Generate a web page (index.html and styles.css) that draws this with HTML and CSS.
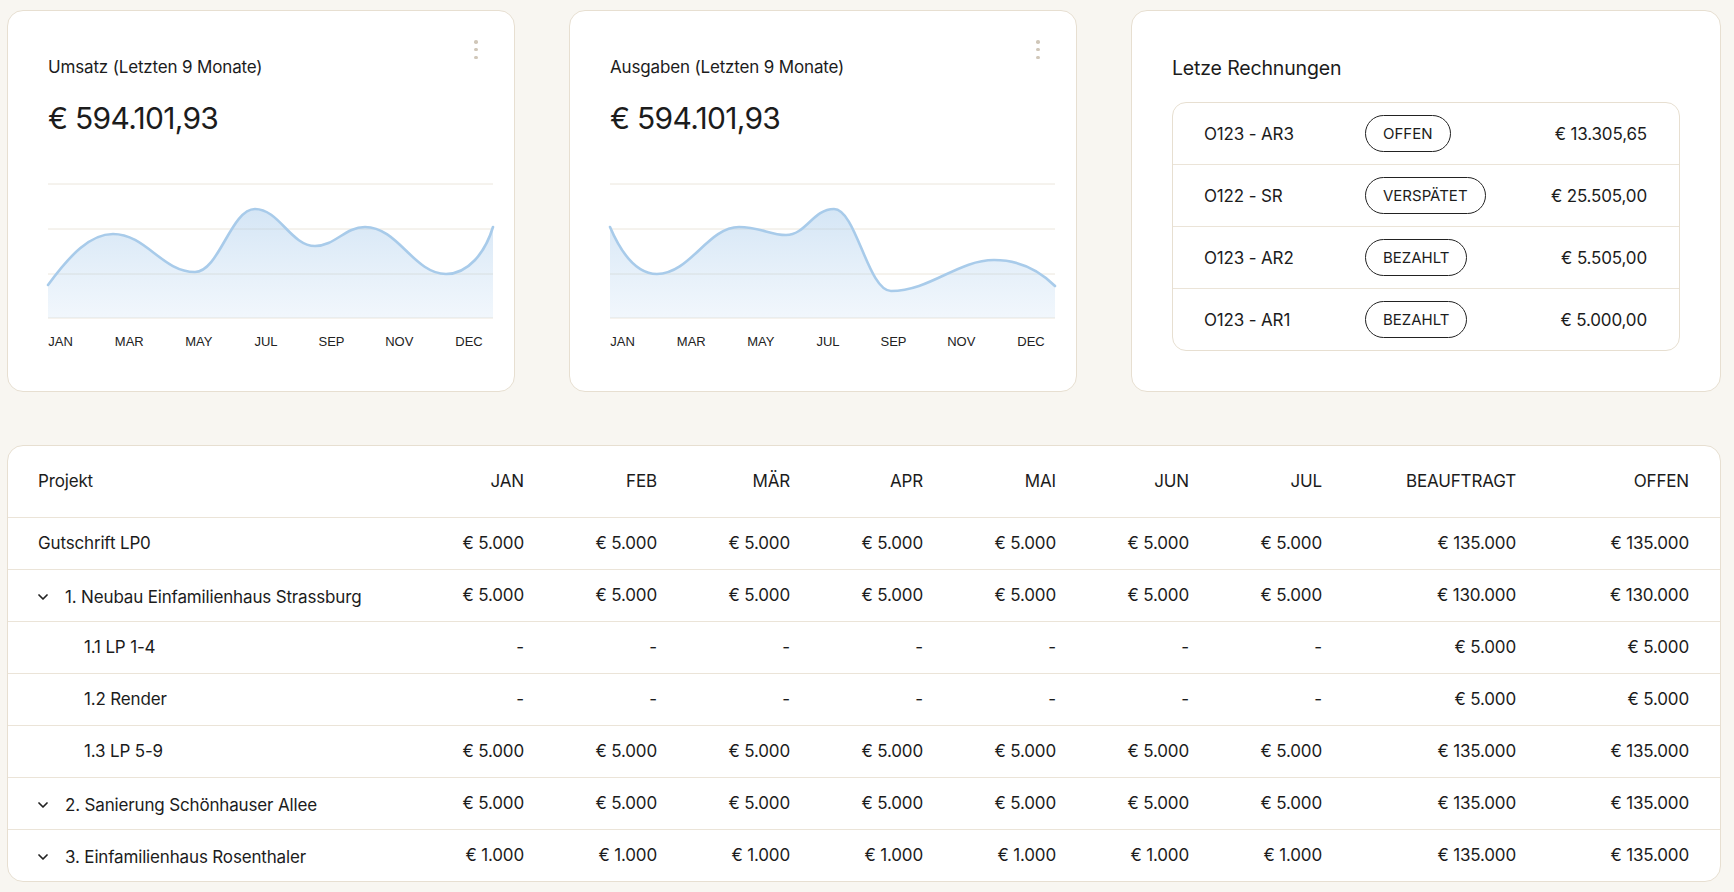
FILE: index.html
```html
<!DOCTYPE html>
<html lang="de">
  <head>
    <meta charset="UTF-8" />
    <title>Finanzen Übersicht</title>
    <link rel="stylesheet" href="styles.css">
  </head>
  <body>
    <main class="dashboard">
      <section class="top-row">
        <div class="card chart-card">
          <button class="kebab" aria-label="Menü"><span></span><span></span><span></span></button>
          <h3 class="card-title">Umsatz (Letzten 9 Monate)</h3>
          <p class="card-amount">€ 594.101,93</p>
          <svg class="chart" width="445" height="168" viewBox="0 0 445 168">
            <defs>
              <linearGradient id="fillA" gradientUnits="userSpaceOnUse" x1="0" y1="20" x2="0" y2="135">
                <stop offset="0" stop-color="rgb(157,196,232)" stop-opacity="0.45" />
                <stop offset="1" stop-color="rgb(170,205,238)" stop-opacity="0.16" />
              </linearGradient>
            </defs>
            <g class="grid">
              <line x1="0" y1="1" x2="445" y2="1" />
              <line x1="0" y1="46" x2="445" y2="46" />
              <line x1="0" y1="91" x2="445" y2="91" />
              <line x1="0" y1="135" x2="445" y2="135" />
            </g>
            <path class="area" fill="url(#fillA)" d="M0,102 C22,72 42,51 65,51 C98,51 114,89 147,89 C171,89 183,26 207,26 C231,26 243,63 267,63 C287,63 297,44 317,44 C350,44 366,91 398,91 C420,91 437,70 445,44 L445,135 L0,135 Z" />
            <path class="line" d="M0,102 C22,72 42,51 65,51 C98,51 114,89 147,89 C171,89 183,26 207,26 C231,26 243,63 267,63 C287,63 297,44 317,44 C350,44 366,91 398,91 C420,91 437,70 445,44" />
            <g class="labels">
              <text x="12.5" y="163">JAN</text>
              <text x="81.3" y="163">MAR</text>
              <text x="150.9" y="163">MAY</text>
              <text x="218" y="163">JUL</text>
              <text x="283.5" y="163">SEP</text>
              <text x="351.3" y="163">NOV</text>
              <text x="421" y="163">DEC</text>
            </g>
          </svg>
        </div>

        <div class="card chart-card">
          <button class="kebab" aria-label="Menü"><span></span><span></span><span></span></button>
          <h3 class="card-title">Ausgaben (Letzten 9 Monate)</h3>
          <p class="card-amount">€ 594.101,93</p>
          <svg class="chart" width="445" height="168" viewBox="0 0 445 168">
            <defs>
              <linearGradient id="fillB" gradientUnits="userSpaceOnUse" x1="0" y1="20" x2="0" y2="135">
                <stop offset="0" stop-color="rgb(157,196,232)" stop-opacity="0.45" />
                <stop offset="1" stop-color="rgb(170,205,238)" stop-opacity="0.16" />
              </linearGradient>
            </defs>
            <g class="grid">
              <line x1="0" y1="1" x2="445" y2="1" />
              <line x1="0" y1="46" x2="445" y2="46" />
              <line x1="0" y1="91" x2="445" y2="91" />
              <line x1="0" y1="135" x2="445" y2="135" />
            </g>
            <path class="area" fill="url(#fillB)" d="M0,44 C12,72 28,91 47,91 C80,91 98,44 129,44 C150,44 160,52 176,52 C196,52 203,26 224,26 C246,26 258,108 281,108 C320,108 348,77 384,77 C412,77 432,90 445,103 L445,135 L0,135 Z" />
            <path class="line" d="M0,44 C12,72 28,91 47,91 C80,91 98,44 129,44 C150,44 160,52 176,52 C196,52 203,26 224,26 C246,26 258,108 281,108 C320,108 348,77 384,77 C412,77 432,90 445,103" />
            <g class="labels">
              <text x="12.5" y="163">JAN</text>
              <text x="81.3" y="163">MAR</text>
              <text x="150.9" y="163">MAY</text>
              <text x="218" y="163">JUL</text>
              <text x="283.5" y="163">SEP</text>
              <text x="351.3" y="163">NOV</text>
              <text x="421" y="163">DEC</text>
            </g>
          </svg>
        </div>

        <div class="card invoices-card">
          <h3 class="invoices-title">Letze Rechnungen</h3>
          <div class="invoice-list">
            <div class="invoice-row">
              <span class="invoice-id">O123 - AR3</span>
              <span class="badge">OFFEN</span>
              <span class="invoice-amount">€ 13.305,65</span>
            </div>
            <div class="invoice-row">
              <span class="invoice-id">O122 - SR</span>
              <span class="badge">VERSPÄTET</span>
              <span class="invoice-amount">€ 25.505,00</span>
            </div>
            <div class="invoice-row">
              <span class="invoice-id">O123 - AR2</span>
              <span class="badge">BEZAHLT</span>
              <span class="invoice-amount">€ 5.505,00</span>
            </div>
            <div class="invoice-row">
              <span class="invoice-id">O123 - AR1</span>
              <span class="badge">BEZAHLT</span>
              <span class="invoice-amount">€ 5.000,00</span>
            </div>
          </div>
        </div>
      </section>

      <section class="table-card">
        <table class="project-table">
          <colgroup>
            <col class="col-project">
            <col class="col-month"><col class="col-month"><col class="col-month"><col class="col-month">
            <col class="col-month"><col class="col-month"><col class="col-month">
            <col class="col-assigned">
            <col class="col-open">
          </colgroup>
          <thead>
            <tr>
              <th>Projekt</th>
              <th>JAN</th><th>FEB</th><th>MÄR</th><th>APR</th><th>MAI</th><th>JUN</th><th>JUL</th>
              <th>BEAUFTRAGT</th><th>OFFEN</th>
            </tr>
          </thead>
          <tbody>
            <tr>
              <td>Gutschrift LP0</td>
              <td>€ 5.000</td><td>€ 5.000</td><td>€ 5.000</td><td>€ 5.000</td><td>€ 5.000</td><td>€ 5.000</td><td>€ 5.000</td>
              <td>€ 135.000</td><td>€ 135.000</td>
            </tr>
            <tr>
              <td><span class="group"><svg class="chevron" width="10" height="6" viewBox="0 0 10 6"><path d="M1 1 L5 5 L9 1" /></svg>1. Neubau Einfamilienhaus Strassburg</span></td>
              <td>€ 5.000</td><td>€ 5.000</td><td>€ 5.000</td><td>€ 5.000</td><td>€ 5.000</td><td>€ 5.000</td><td>€ 5.000</td>
              <td>€ 130.000</td><td>€ 130.000</td>
            </tr>
            <tr class="sub">
              <td>1.1 LP 1-4</td>
              <td>-</td><td>-</td><td>-</td><td>-</td><td>-</td><td>-</td><td>-</td>
              <td>€ 5.000</td><td>€ 5.000</td>
            </tr>
            <tr class="sub">
              <td>1.2 Render</td>
              <td>-</td><td>-</td><td>-</td><td>-</td><td>-</td><td>-</td><td>-</td>
              <td>€ 5.000</td><td>€ 5.000</td>
            </tr>
            <tr class="sub">
              <td>1.3 LP 5-9</td>
              <td>€ 5.000</td><td>€ 5.000</td><td>€ 5.000</td><td>€ 5.000</td><td>€ 5.000</td><td>€ 5.000</td><td>€ 5.000</td>
              <td>€ 135.000</td><td>€ 135.000</td>
            </tr>
            <tr>
              <td><span class="group"><svg class="chevron" width="10" height="6" viewBox="0 0 10 6"><path d="M1 1 L5 5 L9 1" /></svg>2. Sanierung Schönhauser Allee</span></td>
              <td>€ 5.000</td><td>€ 5.000</td><td>€ 5.000</td><td>€ 5.000</td><td>€ 5.000</td><td>€ 5.000</td><td>€ 5.000</td>
              <td>€ 135.000</td><td>€ 135.000</td>
            </tr>
            <tr>
              <td><span class="group"><svg class="chevron" width="10" height="6" viewBox="0 0 10 6"><path d="M1 1 L5 5 L9 1" /></svg>3. Einfamilienhaus Rosenthaler</span></td>
              <td>€ 1.000</td><td>€ 1.000</td><td>€ 1.000</td><td>€ 1.000</td><td>€ 1.000</td><td>€ 1.000</td><td>€ 1.000</td>
              <td>€ 135.000</td><td>€ 135.000</td>
            </tr>
          </tbody>
        </table>
      </section>
    </main>
  </body>
</html>
```

FILE: styles.css
```css
:root {
  --page-bg: #f8f6f1;
  --card-bg: #ffffff;
  --line: #e7dfd1;
  --row-line: #ebe4d8;
  --ink: #1c1c1c;
  --muted-dot: #d0c7b9;
  --chart-line: #a8cbea;
}

* {
  margin: 0;
  padding: 0;
  box-sizing: border-box;
}

body {
  background: var(--page-bg);
  color: var(--ink);
  font-family: "Inter", "Liberation Sans", sans-serif;
  letter-spacing: -0.01em;
}

.dashboard {
  padding: 10px 13px 0 7px;
  display: flex;
  flex-direction: column;
  gap: 53px;
}

/* obere Reihe: zwei Diagramme + Rechnungen */
.top-row {
  display: grid;
  grid-template-columns: 508px 508px 1fr;
  gap: 54px;
}

.card {
  position: relative;
  background: var(--card-bg);
  border: 1px solid var(--line);
  border-radius: 16px;
}

.chart-card {
  padding: 44px 21px 40px 40px;
}

.kebab {
  position: absolute;
  top: 28px;
  right: 35px;
  width: 6px;
  height: 21px;
  border: none;
  background: none;
  display: flex;
  flex-direction: column;
  align-items: center;
  justify-content: space-between;
  padding: 1px 0;
}

.kebab span {
  width: 3.5px;
  height: 3.5px;
  border-radius: 50%;
  background: var(--muted-dot);
}

.card-title {
  font-size: 17px;
  line-height: 24px;
  font-weight: 400;
}

.card-amount {
  margin-top: 21px;
  font-size: 30px;
  line-height: 36px;
  font-weight: 400;
  letter-spacing: -0.7px;
}

.chart {
  display: block;
  margin-top: 47px;
  overflow: visible;
}

.chart .grid line {
  stroke: #ebe6dc;
  stroke-width: 1;
}

.chart .line {
  fill: none;
  stroke: var(--chart-line);
  stroke-width: 2.6;
  stroke-linecap: round;
}

.chart .labels text {
  font-family: "Liberation Sans", Arial, sans-serif;
  font-size: 13px;
  fill: #222;
  text-anchor: middle;
  letter-spacing: 0;
}

/* Rechnungen */
.invoices-card {
  padding: 44px 40px 40px 40px;
}

.invoices-title {
  font-size: 19.5px;
  line-height: 26px;
  font-weight: 400;
}

.invoice-list {
  margin-top: 21px;
  border: 1px solid var(--line);
  border-radius: 14px;
}

.invoice-row {
  height: 62px;
  display: grid;
  grid-template-columns: 161px auto 1fr;
  align-items: center;
  padding: 0 32px 0 31px;
  border-bottom: 1px solid var(--row-line);
  font-size: 17px;
}

.invoice-row:last-child {
  height: 61px;
  border-bottom: none;
}

.badge {
  justify-self: start;
  height: 37px;
  display: inline-flex;
  align-items: center;
  padding: 0 17px;
  border: 1.5px solid #222;
  border-radius: 20px;
  font-size: 15px;
  letter-spacing: 0;
}

.invoice-amount {
  text-align: right;
}

/* Projekttabelle */
.table-card {
  background: var(--card-bg);
  border: 1px solid var(--line);
  border-radius: 16px;
  overflow: hidden;
}

.project-table {
  width: 100%;
  table-layout: fixed;
  border-collapse: collapse;
  font-size: 17px;
}

.col-project { width: 383px; }
.col-month { width: 133px; }
.col-assigned { width: 194px; }
.col-open { width: 204px; }

.project-table th,
.project-table td {
  text-align: right;
  font-weight: 400;
  white-space: nowrap;
  padding: 0;
}

.project-table th {
  height: 71px;
}

.project-table td {
  height: 52px;
}

.project-table th:first-child,
.project-table td:first-child {
  text-align: left;
  padding-left: 30px;
}

.project-table th:last-child,
.project-table td:last-child {
  padding-right: 31px;
}

.project-table thead tr,
.project-table tbody tr {
  border-bottom: 1px solid var(--row-line);
}

.project-table tbody tr:last-child {
  border-bottom: none;
}

.project-table tr.sub td:first-child {
  padding-left: 76px;
}

.group {
  display: inline-flex;
  align-items: center;
  gap: 17px;
}

.chevron {
  display: block;
}

.chevron path {
  fill: none;
  stroke: #222;
  stroke-width: 1.7;
  stroke-linecap: round;
  stroke-linejoin: round;
}
```
